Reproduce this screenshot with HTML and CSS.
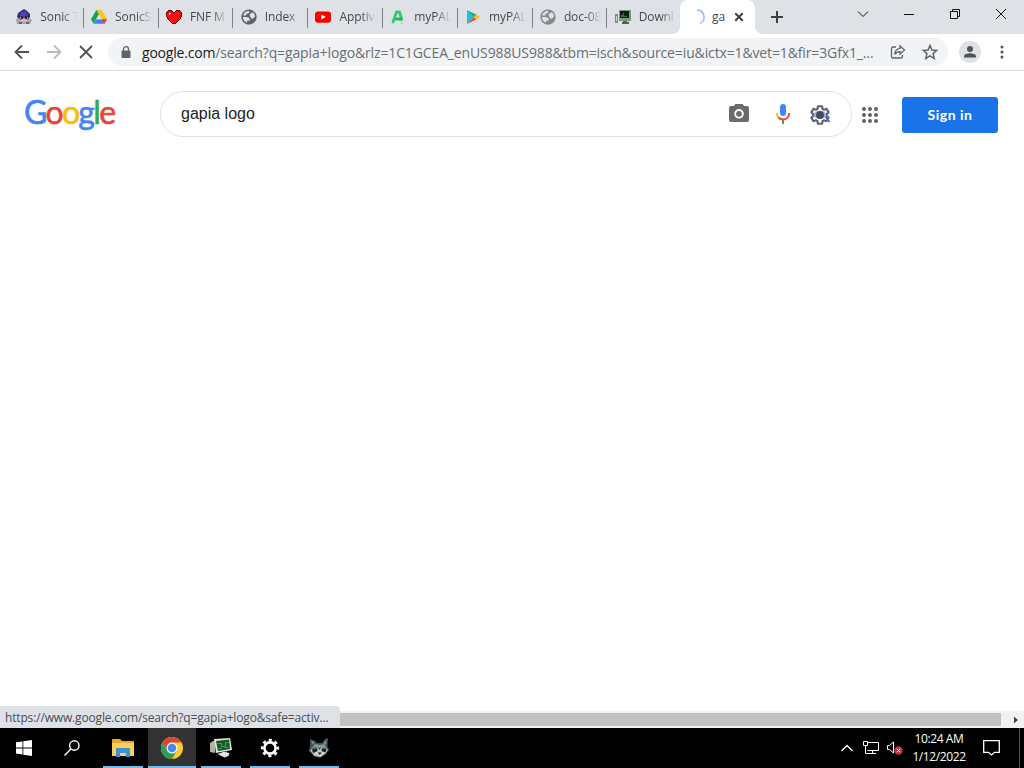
FILE: index.html
```html
<!DOCTYPE html>
<html lang="en">
<head>
    <meta charset="UTF-8">
    <title>gapia logo - Google Search</title>
    <link rel="stylesheet" href="styles.css">
</head>
<body>
    <!-- Tab strip -->
    <div class="tab-strip">
        <div class="tab">
            <svg class="favicon" viewBox="0 0 16 16"><path fill="#302878" d="M8 0l3 2 3 3v3l-2 3H4L1 8l1-4 3-2z"/><path fill="#4b43b5" d="M4 4l5-2 3 4-3 2H4z"/><path fill="#e9b28f" d="M4 8h3l1 2 1-2h3l-1 4-3 1-3-1z"/><path fill="#223" d="M5 7h2v3H5zM9 7h2v3H9z"/><path fill="#a9a4a5" d="M0 10l3-1 2 3 3 1 3-1 2-3 3 2-2 4H1z"/><path fill="#5c5ea0" d="M3 13h3v2H3zM10 13h3v2h-3z"/></svg>
            <span class="tab-title">Sonic T</span>
        </div>
        <div class="tab">
            <svg class="favicon" viewBox="0 0 16 16"><path fill="#14a35a" d="M5.4 1h5L5 10.300l-2.600 4.200L0 10.300z"/><path fill="#fbc11b" d="M5.400 1h5.200L16 10.300h-5.100z"/><path fill="#3f82e8" d="M5.100 10.300H16l-2.600 4.400H2.500z"/><path fill="#dfe1e6" d="M8 5.800l2.700 4.500H5.300z"/><path fill="#ea4335" d="M10.900 10.300H16l-2.600 4.400z"/></svg>
            <span class="tab-title">SonicS</span>
        </div>
        <div class="tab">
            <svg class="favicon" viewBox="0 0 16 16" shape-rendering="crispEdges"><path fill="#5a1010" d="M2 1h4v1h1v1h2V2h1V1h4v1h1v1h1v5h-1v2h-1v1h-1v1h-1v1h-1v1h-1v1H6v-1H5v-1H4v-1H3v-1H2v-1H1V8H0V3h1V2h1z"/><path fill="#fa0c0c" d="M2 2h4v1h1v1h2V3h1V2h4v1h1v5h-1v2h-1v1h-1v1h-1v1h-1v1H6v-1H5v-1H4v-1H3v-1H2V8H1V3h1z"/><path fill="#fff" d="M3 4h2v1H4v1H3z"/></svg>
            <span class="tab-title">FNF M</span>
        </div>
        <div class="tab">
            <svg class="favicon globe" viewBox="1.500 1.500 21 21"><path d="M12 2C6.480 2 2 6.480 2 12s4.480 10 10 10 10-4.480 10-10S17.520 2 12 2zM4 12h4.400c3.400.020 4.900 1.700 4.600 5H9.500v2.500A8 8 0 0 1 4 12zm4-2H4.300A8 8 0 0 1 12.500 4c0 2.400-1.100 3.300-3.200 3.300zm7 5v-2l-2-2V8l3-2 1.500.2A8 8 0 0 1 20 11l-1.500 2z"/></svg>
            <span class="tab-title">Index</span>
        </div>
        <div class="tab">
            <svg class="favicon" viewBox="0 0 16 16"><rect y="2.500" width="16" height="11.300" rx="3" fill="#f00"/><path fill="#fff" d="M6.300 5.600v5L10.700 8z"/></svg>
            <span class="tab-title">Apptiv</span>
        </div>
        <div class="tab">
            <svg class="favicon" viewBox="0 0 16 16" fill="none" stroke="#2fcb68" stroke-width="2.800" stroke-linecap="round" stroke-linejoin="round"><path d="M3 13L6.500 3h3l2.200 7.500"/><path d="M6 10h5" stroke="#28b45c"/><path d="M11 14h2" stroke="#a0e5b8" stroke-width="1.500"/></svg>
            <span class="tab-title">myPAL</span>
        </div>
        <div class="tab">
            <svg class="favicon" viewBox="0 0 16 16"><path fill="#16c5e8" d="M2 1v14l7-7z"/><path fill="#27a86b" d="M2 1l10 5-3 2.500z"/><path fill="#ea4355" d="M2 15l7-7 3 2z"/><path fill="#fbbc1b" d="M11 5.500L15 8l-4 2.500L8.500 8z"/></svg>
            <span class="tab-title">myPAL</span>
        </div>
        <div class="tab">
            <svg class="favicon globe globe-light" viewBox="1.500 1.500 21 21"><path d="M12 2C6.480 2 2 6.480 2 12s4.480 10 10 10 10-4.480 10-10S17.520 2 12 2zM4 12h4.400c3.400.020 4.900 1.700 4.600 5H9.500v2.500A8 8 0 0 1 4 12zm4-2H4.300A8 8 0 0 1 12.500 4c0 2.400-1.100 3.300-3.200 3.300zm7 5v-2l-2-2V8l3-2 1.500.2A8 8 0 0 1 20 11l-1.500 2z"/></svg>
            <span class="tab-title">doc-08</span>
        </div>
        <div class="tab">
            <svg class="favicon" viewBox="0 0 16 16"><path fill="#7e8c7b" d="M0 5h3v9H0z"/><path fill="#d5dccf" d="M1 7h1v5H1z"/><path fill="#879384" d="M4 1h12v11H4z"/><path fill="#092312" d="M5 2h9v7H5z"/><path fill="#2d7b3d" d="M6 6h2V4h1v3h3v1H6z"/><path fill="#52604f" d="M8 12h4v1h2v2H7v-2h1z"/></svg>
            <span class="tab-title">Downl</span>
        </div>
        <div class="tab active">
            <svg class="favicon" viewBox="0 0 16 16" fill="none" stroke="#a9c3f2" stroke-width="1.800"><path d="M8 1a7 7 0 0 1 3 13.300"/></svg>
            <span class="tab-title">ga</span>
            <svg class="tab-close" viewBox="0 0 10 10"><path d="M1.300 1.300l7.400 7.400M8.700 1.300L1.300 8.700"/></svg>
        </div>
        <svg class="new-tab" viewBox="0 0 12 12"><path d="M6 0v12M0 6h12"/></svg>
        <div class="window-controls">
            <svg viewBox="0 0 12 12"><path d="M1 3.500l5 5 5-5"/></svg>
            <svg viewBox="0 0 12 12"><path d="M1 6.500h10"/></svg>
            <svg viewBox="0 0 12 12"><path d="M1.500 3.500h7v7h-7zM3.500 3.500v-2h7v7h-2"/></svg>
            <svg viewBox="0 0 12 12"><path d="M1 1l10 10M11 1L1 11"/></svg>
        </div>
    </div>

    <!-- Toolbar -->
    <div class="toolbar">
        <svg class="nav-icon" viewBox="0 0 16 16"><path d="M15 8H2M8 1.500L1.500 8 8 14.500"/></svg>
        <svg class="nav-icon disabled" viewBox="0 0 16 16"><path d="M1 8h13M8 1.500L14.500 8 8 14.500"/></svg>
        <svg class="nav-icon" viewBox="0 0 16 16"><path d="M2 2l12 12M14 2L2 14"/></svg>
        <div class="omnibox">
            <svg class="lock" viewBox="0 0 10 13"><rect x="0.500" y="4.500" width="9" height="7.500" rx="1"/><path d="M2.500 5V3.200a2.500 2.500 0 0 1 5 0V5" fill="none" stroke="#5f6368" stroke-width="1.300"/></svg>
            <div class="url"><span class="host">google.com</span>/search?q=gapia+logo&amp;rlz=1C1GCEA_enUS988US988&amp;tbm=isch&amp;source=iu&amp;ictx=1&amp;vet=1&amp;fir=3Gfx1_...</div>
            <svg class="share" viewBox="0 0 16 16"><path d="M6 3H3a1.500 1.500 0 0 0-1.500 1.500v8A1.500 1.500 0 0 0 3 14h8a1.500 1.500 0 0 0 1.500-1.500V11"/><path d="M10 2l4.500 4L10 10V7.700C7.500 7.700 6 8.500 4.700 10.500 5 7 7 4.600 10 4.300z"/></svg>
            <svg class="star" viewBox="0 0 16 16"><path d="M8 1.500l1.900 4.500 4.900.4-3.700 3.200 1.100 4.800L8 11.900l-4.200 2.500 1.100-4.800L1.200 6.400 6.100 6z"/></svg>
        </div>
        <div class="profile">
            <svg viewBox="0 0 14 14"><circle cx="7" cy="4" r="3"/><path d="M1 12.500v-1.300C1 9.200 5 8.300 7 8.300s6 .900 6 2.900v1.300z"/></svg>
        </div>
        <svg class="menu" viewBox="0 0 4 16"><circle cx="2" cy="3" r="1.500"/><circle cx="2" cy="8" r="1.500"/><circle cx="2" cy="13" r="1.500"/></svg>
    </div>

    <!-- Page -->
    <div class="page">
        <div class="search-header">
            <div class="logo"><span class="blue">G</span><span class="red">o</span><span class="yellow">o</span><span class="blue">g</span><span class="green">l</span><span class="red">e</span></div>
            <div class="search-box">
                <span class="query">gapia logo</span>
                <svg class="camera" viewBox="0 0 20 18"><path fill="#6b6b6b" fill-rule="evenodd" d="M6.500 0h7l1.800 2H18a2 2 0 0 1 2 2v12a2 2 0 0 1-2 2H2a2 2 0 0 1-2-2V4a2 2 0 0 1 2-2h2.700zM10 5a4.800 4.800 0 1 0 0 9.600A4.800 4.800 0 0 0 10 5z"/><circle cx="10" cy="9.800" r="2.900" fill="#6b6b6b"/></svg>
                <svg class="mic" viewBox="0 0 16 22"><rect x="5" y="1" width="6" height="12" rx="3" fill="#4285f4"/><path fill="#34a853" d="M7 17h2v4H7z"/><g fill="none" stroke-width="2"><path stroke="#fbbc04" d="M1.900 10c0 2 .700 3.500 1.900 4.700"/><path stroke="#ea4335" d="M3.500 14.500C4.700 15.900 6.200 16.600 8 16.600c3.400 0 6.100-2.600 6.100-6.600"/></g></svg>
                <svg class="lens" viewBox="0 0 24 24"><path fill="none" stroke="#5b6270" stroke-width="2.300" d="M19.140 12.940c.040-.300.060-.610.060-.940 0-.320-.020-.640-.070-.940l2.030-1.580c.180-.140.230-.410.120-.610l-1.920-3.320c-.120-.220-.370-.290-.590-.220l-2.390.960c-.500-.380-1.030-.700-1.620-.940l-.360-2.540c-.040-.240-.240-.410-.480-.410h-3.840c-.240 0-.430.170-.470.410l-.360 2.540c-.590.240-1.130.570-1.620.940l-2.390-.960c-.220-.080-.470 0-.590.220L2.740 8.870c-.120.210-.080.470.120.610l2.030 1.580c-.050.300-.090.630-.090.940s.020.640.070.940l-2.030 1.580c-.180.140-.230.410-.120.610l1.920 3.320c.120.220.370.290.590.220l2.390-.960c.500.380 1.030.700 1.620.940l.360 2.540c.050.240.240.410.480.410h3.840c.240 0 .440-.170.470-.410l.360-2.540c.590-.240 1.130-.560 1.620-.940l2.390.960c.220.080.470 0 .590-.220l1.920-3.320c.120-.220.070-.470-.120-.610z"/><path d="M6 10c3-3.500 9-3.500 12 0v4c-3 3-9 3-12 0z" fill="#8fb2ef"/><circle cx="12" cy="12" r="4.300" fill="#454d5c"/><path d="M18 14l2 2M21 18l1.500 1.500" stroke="#3f6fca" stroke-width="2"/></svg>
            </div>
            <svg class="apps" viewBox="0 0 16 16"><circle cx="2" cy="2" r="2"/><circle cx="8" cy="2" r="2"/><circle cx="14" cy="2" r="2"/><circle cx="2" cy="8" r="2"/><circle cx="8" cy="8" r="2"/><circle cx="14" cy="8" r="2"/><circle cx="2" cy="14" r="2"/><circle cx="8" cy="14" r="2"/><circle cx="14" cy="14" r="2"/></svg>
            <div class="sign-in">Sign in</div>
        </div>
        <div class="scrollbar">
            <div class="thumb"></div>
            <svg class="scroll-arrow" viewBox="0 0 6 8"><path d="M1 0.500v7L5 4z"/></svg>
        </div>
        <div class="status">https://www.google.com/search?q=gapia+logo&amp;safe=activ...</div>
    </div>

    <!-- Taskbar -->
    <div class="taskbar">
        <div class="task">
            <svg width="16" height="16" viewBox="0 0 16 16"><path fill="#fff" d="M0 2.300l6.500-.9v6.100H0zM7.300 1.300L16 0v7.500H7.300zM0 8.400h6.500v6.100L0 13.600zM7.300 8.400H16V16l-8.700-1.300z"/></svg>
        </div>
        <div class="task search">
            <svg width="16" height="16" viewBox="0 0 16 16" fill="none" stroke="#fff" stroke-width="1.400"><circle cx="10.300" cy="5.500" r="4.700"/><path d="M6.900 9L.5 15.500"/></svg>
        </div>
        <div class="task open">
            <svg width="22" height="20" viewBox="0 0 22 20"><path fill="#e8a92e" d="M0 2a1 1 0 0 1 1-1h7l2 2h11a1 1 0 0 1 1 1v14H0z"/><path fill="#f9cd62" d="M0 5h22v13H0z"/><path fill="#3d91d1" d="M4 19v-8a1 1 0 0 1 1-1h12a1 1 0 0 1 1 1v8h-4v-4H8v4z"/></svg>
        </div>
        <div class="task open current">
            <svg width="22" height="22" viewBox="0 0 22 22"><circle cx="11" cy="11" r="11" fill="#fccb2f"/><path fill="#dc4437" d="M1.470 5.500A11 11 0 0 1 20.530 5.500H11L6.240 13.750z"/><path fill="#2c9f57" d="M1.470 5.500A11 11 0 0 0 11 22l4.760-8.250H6.240z"/><circle cx="11" cy="11" r="5.500" fill="#fff"/><circle cx="11" cy="11" r="4.300" fill="#4688ee"/></svg>
        </div>
        <div class="task open">
            <svg width="24" height="22" viewBox="0 0 24 22"><path fill="#aeb5a8" d="M1 6l5-3v13l-5-1z"/><path fill="#dfe3d7" d="M5 2l16-1 2 12-16 3z"/><path fill="#16542a" d="M7 4l13-1.500 1 9.500-12 2z"/><path fill="none" stroke="#39a154" stroke-width="1.200" d="M8.500 6.500h4v3h4v-4h3M9.500 11.500h3.500M15.500 10.500h4"/><path fill="#a5ab9f" d="M13 15l5-.5v2h-4z"/><path fill="#e5e8df" d="M8.500 17l6-2 6 1-1 3-4 1.500z"/></svg>
        </div>
        <div class="task open">
            <svg width="20" height="20" viewBox="0 0 20 20" fill="none" stroke="#fff"><circle cx="10" cy="10" r="5.600" stroke-width="2.600"/><circle cx="10" cy="10" r="7.800" stroke-width="2.700" stroke-dasharray="3.060 3.065" stroke-dashoffset="1.530"/></svg>
        </div>
        <div class="task open">
            <svg width="22" height="22" viewBox="0 0 22 22"><path fill="#435356" d="M2 2l5 2 2 2h5l3-4 3-1-.5 8 1.500 4-3 4-6 4-6-2-5-5 1-5z"/><path fill="#859896" d="M3.500 3.500l3 2-2 2zM18.500 3l-3 3 2 2zM7 7l5 1 4-1 3 4-4-1-4 1-4-1-4 2z"/><path fill="#c3cdca" d="M2 13l7-2.500L11.500 13l2.500-3 6 2.500-2.500 4-5 3.500-6-1z"/><path fill="#172022" d="M4 12.500l5-1.500.5 3L5 16zM14 11l4.500 1-1 3.500-4-1.500z"/><path fill="#111" d="M10 15.500h3.500L11.700 18z"/></svg>
        </div>

        <div class="tray">
            <svg class="chevron" viewBox="0 0 12 8"><path d="M.5 7L6 1.500 11.500 7"/></svg>
            <svg class="network" viewBox="0 0 16 14"><path d="M4.500 1.500h11v8h-11M9.500 9.500v3M6 12.500h7M.5.500h4v4h-4zM2.500 4.500v8H6"/></svg>
            <svg class="volume" viewBox="0 0 16 14"><path d="M.5 4.500h2L6.500 1v11l-4-3.500h-2z"/><circle cx="11.500" cy="9.500" r="4.200" fill="#cf2f3a" stroke="none"/><path d="M9.800 7.800l3.400 3.400M13.200 7.800l-3.400 3.400"/></svg>
            <div class="clock">
                <div>10:24 AM</div>
                <div>1/12/2022</div>
            </div>
            <svg class="notify" viewBox="0 0 17 16"><path d="M.7.700h15.600v11.600h-4.800L8.500 15l-3-2.700H.700z"/></svg>
            <div class="show-desktop"></div>
        </div>
    </div>
</body>
</html>
```
FILE: styles.css
```css
* {
    margin: 0;
    padding: 0;
    box-sizing: border-box;
}

body {
    width: 1024px;
    height: 768px;
    overflow: hidden;
    display: flex;
    flex-direction: column;
    background: #fff;
    font-family: "Open Sans", "Noto Sans", sans-serif;
}

svg {
    display: block;
    flex-shrink: 0;
}

/* Tab strip */
.tab-strip {
    display: flex;
    height: 34px;
    padding-left: 9px;
    background: #dee1e6;
}

.tab {
    display: flex;
    align-items: center;
    flex-shrink: 0;
    width: 74.8px;
    padding-left: 7.3px;
    background: linear-gradient(#80848a, #80848a) right 8px / 1px 20px no-repeat;
}

.tab:nth-child(9) {
    background: none;
    width: 72.6px;
}

.tab.active {
    position: relative;
    width: 75px;
    padding-left: 9px;
    background: #fff;
    border-radius: 8px 8px 0 0;
}

/* flared feet of the active tab */
.tab.active::before,
.tab.active::after {
    content: "";
    position: absolute;
    bottom: 0;
    width: 7px;
    height: 7px;
}

.tab.active::before {
    left: -7px;
    background: radial-gradient(circle at 0 0, transparent 6.5px, #fff 7px);
}

.tab.active::after {
    right: -7px;
    background: radial-gradient(circle at 100% 0, transparent 6.5px, #fff 7px);
}

.favicon {
    width: 16px;
    height: 16px;
}

.globe {
    fill: #5f6368;
}

.globe-light {
    fill: #85888c;
}

.tab-title {
    width: 37px;
    margin-left: 8px;
    white-space: nowrap;
    font-size: 12px;
    line-height: 18px;
    letter-spacing: -0.1px;
    color: #45494d;
    -webkit-mask-image: linear-gradient(90deg, #000 60%, transparent);
    mask-image: linear-gradient(90deg, #000 60%, transparent);
}

.active .tab-title {
    width: 14px;
    margin-left: 7px;
    -webkit-mask-image: none;
    mask-image: none;
}

.tab-close {
    width: 10px;
    height: 10px;
    margin-left: 8px;
    stroke: #3c4043;
    stroke-width: 2;
}

.new-tab {
    width: 12px;
    height: 12px;
    margin: 11px 0 0 16px;
    stroke: #3c4043;
    stroke-width: 2;
}

.window-controls {
    display: flex;
    gap: 34px;
    margin: 8px 17px 0 auto;
}

.window-controls svg {
    width: 12px;
    height: 12px;
    fill: none;
    stroke: #111;
    stroke-width: 1;
}

/* Toolbar */
.toolbar {
    display: flex;
    align-items: center;
    height: 37px;
    padding-left: 14px;
    border-bottom: 1px solid #dcdcde;
}

.nav-icon {
    width: 16px;
    height: 16px;
    margin-right: 16px;
    fill: none;
    stroke: #505357;
    stroke-width: 1.8;
}

.nav-icon.disabled {
    stroke: #b9bbbe;
}

.omnibox {
    display: flex;
    align-items: center;
    width: 840px;
    height: 28px;
    margin-left: -2px;
    padding-left: 13px;
    border-radius: 14px;
    background: #f1f3f4;
}

.lock {
    width: 10px;
    height: 13px;
    fill: #5f6368;
}

.url {
    width: 748px;
    margin-left: 11px;
    white-space: nowrap;
    font-size: 14px;
    letter-spacing: -0.13px;
    color: #6a6e73;
}

.host {
    letter-spacing: -0.2px;
    color: #202124;
}

.share,
.star {
    width: 16px;
    height: 16px;
    fill: none;
    stroke: #5f6368;
    stroke-width: 1.3;
}

.star {
    margin-left: 16px;
    stroke-width: 1.5;
}

.profile {
    display: flex;
    align-items: center;
    justify-content: center;
    width: 22px;
    height: 22px;
    margin-left: 11px;
    border-radius: 50%;
    background: #dee1e6;
}

.profile svg {
    width: 14px;
    height: 14px;
    fill: #4f5459;
}

.menu {
    width: 4px;
    height: 16px;
    margin-left: 19px;
    fill: #505357;
}

/* Page */
.page {
    position: relative;
    display: flex;
    flex-direction: column;
    flex: 1;
}

.search-header {
    display: flex;
    align-items: center;
    padding: 20px 0 0 24px;
}

.logo {
    width: 136px;
    padding-bottom: 5px;
    font-family: Lato, sans-serif;
    font-size: 32px;
    line-height: 40px;
    letter-spacing: -1.7px;
    white-space: nowrap;
    -webkit-text-stroke: 0.6px;
}

.blue {
    color: #4285f4;
}

.red {
    color: #ea4335;
}

.yellow {
    color: #fbbc05;
}

.green {
    color: #34a853;
}

.search-box {
    display: flex;
    align-items: center;
    width: 692px;
    height: 46px;
    padding-left: 20px;
    border: 1px solid #dfe1e5;
    border-radius: 23px;
}

.query {
    width: 548px;
    font-family: "Liberation Sans", Arial, sans-serif;
    font-size: 16px;
    color: #222;
}

.camera {
    width: 20px;
    height: 18px;
    margin-bottom: 2px;
}

.mic {
    width: 16px;
    height: 22px;
    margin-left: 26px;
}

.lens {
    width: 22px;
    height: 22px;
    margin: 1px 0 0 18px;
}

.apps {
    width: 16px;
    height: 16px;
    margin: 2px 0 0 10px;
    fill: #5f6368;
}

.sign-in {
    width: 96px;
    height: 36px;
    margin: 2px 0 0 24px;
    border-radius: 3px;
    background: #1a73e8;
    font-family: Lato, sans-serif;
    font-size: 14px;
    font-weight: bold;
    line-height: 35px;
    letter-spacing: 0.5px;
    text-align: center;
    color: #fff;
}

.scrollbar {
    display: flex;
    align-items: center;
    height: 17px;
    margin-top: auto;
    background: #f1f1f1;
}

.thumb {
    width: 1001px;
    height: 13px;
    background: #c1c1c1;
}

.scroll-arrow {
    width: 6px;
    height: 8px;
    margin-left: 12px;
    fill: #444;
}

/* link preview lying over the scrollbar */
.status {
    position: absolute;
    left: 0;
    bottom: 0;
    width: 340px;
    height: 22px;
    padding-left: 5px;
    border-top-right-radius: 4px;
    background: #dee1e6;
    font-size: 12px;
    line-height: 23px;
    letter-spacing: -0.16px;
    white-space: nowrap;
    color: #4a4d52;
}

/* Taskbar */
.taskbar {
    display: flex;
    height: 40px;
    background: #000;
}

.task {
    display: flex;
    align-items: center;
    justify-content: center;
    width: 48px;
    margin-right: 1px;
}

.task:first-child {
    margin-right: 0;
}

.task.search {
    margin-right: 3px;
}

.task.open {
    background: linear-gradient(#76b9ed, #76b9ed) center bottom / 40px 2px no-repeat;
}

.task.current {
    background: #333 linear-gradient(#76b9ed, #76b9ed) center bottom / 48px 2px no-repeat;
}

.tray {
    display: flex;
    align-items: center;
    margin-left: auto;
}

.tray svg {
    fill: none;
    stroke: #fff;
}

.chevron {
    width: 12px;
    height: 8px;
    stroke-width: 1.4;
}

.network {
    width: 16px;
    height: 14px;
    margin-left: 10px;
}

.volume {
    width: 16px;
    height: 14px;
    margin-left: 8px;
}

.clock {
    width: 62px;
    margin-left: 5px;
    font-size: 12px;
    line-height: 18px;
    letter-spacing: -0.4px;
    text-align: center;
    color: #fff;
}

.notify {
    width: 17px;
    height: 16px;
    margin-left: 13px;
    stroke-width: 1.3;
}

.show-desktop {
    width: 5px;
    height: 40px;
    margin-left: 19px;
    border-left: 1px solid #555;
}
```
